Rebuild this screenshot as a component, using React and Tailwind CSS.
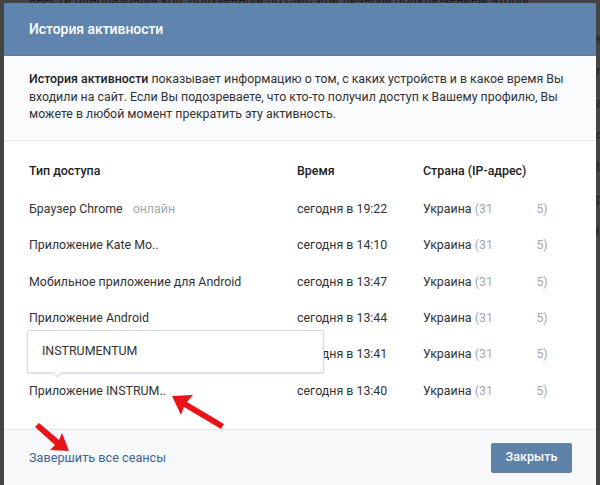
const sessions = [
  { name: 'Браузер Chrome', online: true, time: 'сегодня в 19:22' },
  { name: 'Приложение Kate Mo..', time: 'сегодня в 14:10' },
  { name: 'Мобильное приложение для Android', time: 'сегодня в 13:47' },
  { name: 'Приложение Android', time: 'сегодня в 13:44' },
  { name: '', time: 'сегодня в 13:41' },
  { name: 'Приложение INSTRUM..', time: 'сегодня в 13:40' },
];

// обрезанные буквы страницы за окном, справа
const edgeLetters = ['e', 'г', 'a', 'c', 't', 'р', 'i'];

const App = () => {
  return (
    <div className="w-[600px] h-[485px] overflow-hidden bg-[#444444] font-['Roboto',sans-serif] text-[12.4px] text-[#333]">
      <div className="h-[3px] overflow-hidden pl-[29px] text-[#1c1c1c] whitespace-nowrap leading-[6px] text-[13px]">
        <div className="-mt-[3px]">ввести одноразовый код, полученный по СМС или личным подключением чтобы</div>
      </div>
      <div className="flex pl-1">
        <div className="relative w-[592px] h-[482px] flex flex-col bg-white shrink-0">
          <div className="h-[53px] shrink-0 flex items-center pl-[25px] bg-[#5f85ae] border-b border-[#5579a2] text-white font-medium text-[13.9px]">
            История активности
          </div>
          <div className="h-[85px] shrink-0 px-[25px] pt-[15px] leading-[17.5px] text-[12.35px] bg-[#fafbfd] border-b border-[#e7e9ed]">
            <b className="font-medium text-[#222]">История активности</b> показывает информацию о том, с каких устройств и в какое время Вы входили на сайт. Если Вы подозреваете, что кто-то получил доступ к Вашему профилю, Вы можете в любой момент прекратить эту активность.
          </div>
          <div className="flex-1 px-[25px] pt-[16px]">
            <div className="flex h-[28px] mb-[6px] items-center font-medium text-[#222]">
              <div className="w-[268px]">Тип доступа</div>
              <div className="w-[126px]">Время</div>
              <div>Страна (IP-адрес)</div>
            </div>
            {sessions.map((s) => (
              <div key={s.time} className="flex h-[36.4px] items-center">
                <div className="w-[268px] flex gap-[10px]">
                  <span>{s.name}</span>
                  {s.online && <span className="text-[#a3a8ae]">онлайн</span>}
                </div>
                <div className="w-[126px]">{s.time}</div>
                <div className="flex">
                  <span>Украина&nbsp;</span>
                  <span className="text-[#a8a8a8] w-[73px] flex justify-between">
                    <span>(31</span>
                    <span>5)</span>
                  </span>
                </div>
              </div>
            ))}
          </div>
          <div className="h-[56px] shrink-0 flex items-center justify-between pl-[25px] pr-6 bg-[#f7f8fa] border-t border-[#e4e7eb]">
            <a className="text-[#41658f] text-[12.7px]">Завершить все сеансы</a>
            <button className="w-[81px] h-[30px] rounded-[2px] bg-[#5e81a8] text-white font-medium text-[12.6px]">Закрыть</button>
          </div>

          <div className="absolute left-[23px] top-[327px] w-[297px] h-[43px] flex items-center pl-[14px] bg-white border border-[#d3dae3] rounded-[2px] shadow-[0_1px_2px_rgba(80,100,130,0.2)]">
            INSTRUMENTUM
            <div className="absolute left-[26px] -bottom-[4px] w-[7px] h-[7px] rotate-45 bg-white border-r border-b border-[#d3dae3]" />
          </div>
          <svg className="absolute left-[166px] top-[391px] w-[56px] h-[36px]" viewBox="170 394 56 36" fill="#e8141a">
            <path d="M172 396 L193 395 L187 402 L224 424 L221 429 L184 407 L181 415 Z" />
          </svg>
          <svg className="absolute left-[30px] top-[419px] w-[40px] h-[32px]" viewBox="34 422 40 32" fill="#e8141a">
            <path d="M69 451 L50 450 L55 445 L35 427 L39 423 L59 440 L62 433 Z" />
          </svg>
        </div>
        <div className="w-1 shrink-0 overflow-hidden text-[#222] text-[13px] pt-[20px] leading-[32px]">
          {edgeLetters.map((l, i) => (
            <div key={i}>{l}</div>
          ))}
        </div>
      </div>
    </div>
  );
};

export default App;
